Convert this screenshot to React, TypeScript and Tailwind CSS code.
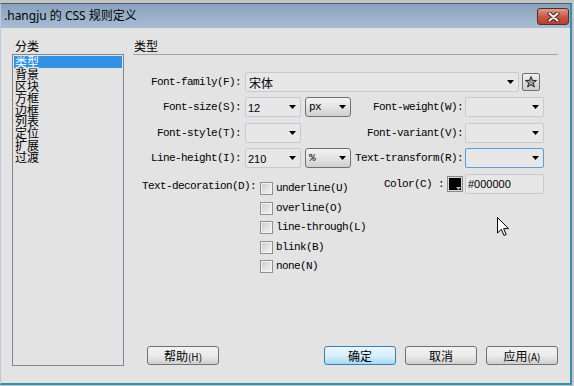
import React from "react";

const mono = "font-['Liberation_Mono',monospace] text-[11px] tracking-[-0.6px] text-black";
const cjk = "font-['Noto_Sans_CJK_SC',sans-serif] text-[12px] text-black";
const sans = "font-['Liberation_Sans',sans-serif] text-[11px] text-black";

function Arrow() {
  return (
    <svg width="7" height="4" viewBox="0 0 7 4" className="shrink-0">
      <path d="M0 0h7L3.5 4z" fill="#000" />
    </svg>
  );
}

function Label({ className, children }: { className: string; children: React.ReactNode }) {
  return <div className={`${className} ${mono} whitespace-nowrap text-right leading-[20px]`}>{children}</div>;
}

function Select({ className, children, focused }: { className: string; children?: React.ReactNode; focused?: boolean }) {
  return (
    <div
      className={`${className} flex h-[20px] items-center justify-between rounded-[2px] border bg-[#e7e7e7] pl-[2px] pr-[4px] ${
        focused ? "border-[#5c9fd8]" : "border-[#c6cad0]"
      }`}
    >
      <div className="leading-[18px]">{children}</div>
      <Arrow />
    </div>
  );
}

function UnitButton({ children }: { children: React.ReactNode }) {
  return (
    <div className="ml-[4px] flex h-[20px] w-[46px] items-center justify-between rounded-[3px] border border-[#707070] bg-linear-to-b from-[#f2f2f2] via-[#e4e4e4] to-[#cfcfcf] pl-[3px] pr-[4px]">
      <span className={`${mono} leading-[18px]`}>{children}</span>
      <Arrow />
    </div>
  );
}

function Checkbox({ label }: { label: string }) {
  return (
    <div className="flex h-[13px] items-center">
      <div className="h-[13px] w-[13px] border border-[#8e8f8f] bg-[#f4f4f4] p-[1px]">
        <div className="h-full w-full bg-linear-to-br from-[#cfcfcf] to-[#f3f3f3]" />
      </div>
      <span className={`${mono} ml-[3px] leading-[13px]`}>{label}</span>
    </div>
  );
}

function DlgButton({ children, primary, className }: { children: React.ReactNode; primary?: boolean; className: string }) {
  return (
    <div
      className={`${className} flex h-[19px] w-[72px] items-center justify-center rounded-[3px] border ${
        primary
          ? "border-[#3c7fb1] bg-linear-to-b from-[#eaf6fd] via-[#d9f0fc] to-[#a7d9f5]"
          : "border-[#707070] bg-linear-to-b from-[#f2f2f2] via-[#ebebeb] to-[#cfcfcf]"
      }`}
    >
      <span className={`${cjk} leading-[17px]`}>{children}</span>
    </div>
  );
}

const categories = ["类型", "背景", "区块", "方框", "边框", "列表", "定位", "扩展", "过渡"];

export default function App() {
  return (
    <div className="relative h-[386px] w-[574px] overflow-hidden bg-[#c8c8c8]">
      <div className="h-[3px] bg-[#c4c4c4]" />
      <div className="flex h-[382px] w-[572px] flex-col border-t border-r-2 border-b-2 border-l border-t-[#4f5d6e] border-r-[#2f93ad] border-b-[#2f93ad] border-l-[#b7cbe0]">
        {/* Title bar */}
        <div className="flex h-[24px] items-start justify-between bg-linear-to-b from-[#8aa1be] to-[#a8bdd4]">
          <div className="pl-[3px] font-['Noto_Sans','Noto_Sans_CJK_SC',sans-serif] text-[12px] leading-[24px] text-black">
            .hangju 的 CSS 规则定义
          </div>
          <div className="mt-[4px] mr-[1px] flex h-[17px] w-[32px] items-center justify-center rounded-[3px] border border-[#5d2a24] bg-linear-to-b from-[#dd9c8e] via-[#c65a46] to-[#b5412d]">
            <svg width="13" height="10" viewBox="0 0 13 10">
              <path d="M2.5 1.5L10.5 8.5M10.5 1.5L2.5 8.5" stroke="#4a1d17" strokeWidth="4" strokeLinecap="round" />
              <path d="M2.5 1.5L10.5 8.5M10.5 1.5L2.5 8.5" stroke="#f2f2f2" strokeWidth="2.2" strokeLinecap="round" />
            </svg>
          </div>
        </div>

        {/* Client */}
        <div className="flex h-[355px] bg-[#e3e3e3]">
          {/* Left column */}
          <div className="ml-[11px] flex w-[112px] flex-col pt-[12px]">
            <div className={`${cjk} pl-[3px] leading-[12px]`}>分类</div>
            <div className="mt-[2px] h-[312px] border border-[#828790] px-[1px] pt-[1px]">
              {categories.map((c, i) => (
                <div
                  key={c}
                  className={`${cjk} h-[11.9px] pl-[1px] leading-[12px] ${i === 0 ? "bg-[#3392e3] text-white" : ""}`}
                >
                  <span className={i === 0 ? "text-white" : "text-black"}>{c}</span>
                </div>
              ))}
            </div>
          </div>

          {/* Right column */}
          <div className="ml-[9px] flex w-[425px] flex-col pt-[12px] pb-[18px]">
            <div className={`${cjk} pl-[1px] leading-[12px]`}>类型</div>
            <div className="mt-[2px] h-[1px] bg-[#a3a3a3]" />

            {/* Row 1 */}
            <div className="mt-[17px] flex h-[20px] items-center">
              <Label className="w-[108px]">Font-family(F):</Label>
              <Select className="ml-[4px] w-[274px]">
                <span className={`${cjk} pl-[1px]`}>宋体</span>
              </Select>
              <div className="ml-[3px] flex h-[18px] w-[18px] items-center justify-center rounded-[2px] border border-[#707070] bg-linear-to-b from-[#f0f0f0] to-[#cdcdcd]">
                <svg width="12" height="12" viewBox="0 0 12 12">
                  <path
                    d="M6 0.5L7.41 4.36L11.52 4.51L8.28 7.04L9.41 10.99L6 8.7L2.59 10.99L3.72 7.04L0.48 4.51L4.59 4.36Z"
                    fill="#9a9a9a"
                    stroke="#222"
                    strokeWidth="1"
                    strokeLinejoin="round"
                  />
                </svg>
              </div>
            </div>

            {/* Row 2 */}
            <div className="mt-[5px] flex h-[20px] items-center">
              <Label className="w-[108px]">Font-size(S):</Label>
              <Select className="ml-[4px] w-[56px]">
                <span className={sans}>12</span>
              </Select>
              <UnitButton>px</UnitButton>
              <Label className="w-[112px]">Font-weight(W):</Label>
              <Select className="ml-[2px] w-[79px]" />
            </div>

            {/* Row 3 */}
            <div className="mt-[6px] flex h-[20px] items-center">
              <Label className="w-[108px]">Font-style(T):</Label>
              <Select className="ml-[4px] w-[56px]" />
              <div className="w-[50px]" />
              <Label className="w-[112px]">Font-variant(V):</Label>
              <Select className="ml-[2px] w-[79px]" />
            </div>

            {/* Row 4 */}
            <div className="mt-[5px] flex h-[20px] items-center">
              <Label className="w-[108px]">Line-height(I):</Label>
              <Select className="ml-[4px] w-[56px]">
                <span className={sans}>210</span>
              </Select>
              <UnitButton>%</UnitButton>
              <Label className="w-[112px]">Text-transform(R):</Label>
              <Select className="ml-[2px] w-[79px]" focused />
            </div>

            {/* Row 5 */}
            <div className="mt-[6px] flex items-start">
              <div className={`${mono} w-[123px] whitespace-nowrap pt-[6px] text-right leading-[13px]`}>Text-decoration(D):</div>
              <div className="ml-[4px] flex w-[124px] flex-col gap-[6.5px] pt-[8px]">
                <Checkbox label="underline(U)" />
                <Checkbox label="overline(O)" />
                <Checkbox label="line-through(L)" />
                <Checkbox label="blink(B)" />
                <Checkbox label="none(N)" />
              </div>
              <div className="flex h-[20px] items-center">
                <div className={`${mono} w-[60px] whitespace-nowrap leading-[20px]`}>Color(C) :</div>
                <div className="relative ml-[3px] h-[16px] w-[16px] border border-[#8a8a8a] bg-[#d8d8d8] p-[1px]">
                  <div className="h-full w-full bg-black" />
                  <svg width="5" height="3" viewBox="0 0 5 3" className="absolute right-[1px] bottom-[1px]">
                    <path d="M0 0h5L2.5 3z" fill="#bbbbbb" />
                  </svg>
                </div>
                <div className="ml-[2px] flex h-[20px] w-[79px] items-center rounded-[2px] border border-[#c6cad0] bg-[#e7e7e7] pl-[2px]">
                  <span className={`${sans} leading-[18px]`}>#000000</span>
                </div>
              </div>
            </div>

            {/* Buttons */}
            <div className="mt-auto flex h-[19px]">
              <DlgButton className="ml-[14px]">
                帮助<span className="text-[10px]">(H)</span>
              </DlgButton>
              <DlgButton className="ml-auto" primary>
                确定
              </DlgButton>
              <DlgButton className="ml-[9px]">取消</DlgButton>
              <DlgButton className="ml-[9px]">
                应用<span className="text-[10px]">(A)</span>
              </DlgButton>
            </div>
          </div>
        </div>
      </div>

      {/* Mouse cursor */}
      <svg width="12" height="20" viewBox="0 0 12 20" className="absolute top-[217px] left-[497px]">
        <path d="M0.5 0.5L0.5 16L4.3 12.3L7 18.5L9.2 17.5L6.6 11.6L11.5 11.6Z" fill="#fff" stroke="#000" strokeWidth="1" strokeLinejoin="round" />
      </svg>
    </div>
  );
}
